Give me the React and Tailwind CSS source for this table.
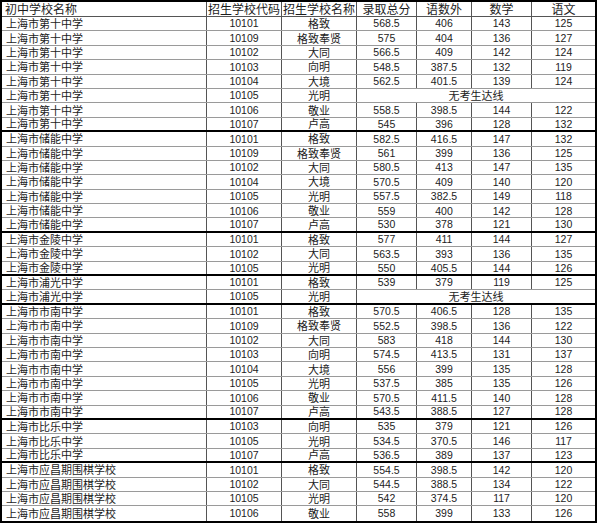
import React from 'react'

const groups = [
    {
        name: "上海市第十中学",
        rows: [
            ["10101", "格致", "568.5", "406", "143", "125"],
            ["10109", "格致奉贤", "575", "404", "136", "127"],
            ["10102", "大同", "566.5", "409", "142", "124"],
            ["10103", "向明", "548.5", "387.5", "132", "119"],
            ["10104", "大境", "562.5", "401.5", "139", "124"],
            ["10105", "光明", null],
            ["10106", "敬业", "558.5", "398.5", "144", "122"],
            ["10107", "卢高", "545", "396", "128", "132"],
        ],
    },
    {
        name: "上海市储能中学",
        rows: [
            ["10101", "格致", "582.5", "416.5", "147", "132"],
            ["10109", "格致奉贤", "561", "399", "136", "125"],
            ["10102", "大同", "580.5", "413", "147", "135"],
            ["10104", "大境", "570.5", "409", "140", "120"],
            ["10105", "光明", "557.5", "382.5", "149", "118"],
            ["10106", "敬业", "559", "400", "142", "128"],
            ["10107", "卢高", "530", "378", "121", "130"],
        ],
    },
    {
        name: "上海市金陵中学",
        rows: [
            ["10101", "格致", "577", "411", "144", "127"],
            ["10102", "大同", "563.5", "393", "136", "135"],
            ["10105", "光明", "550", "405.5", "144", "126"],
        ],
    },
    {
        name: "上海市浦光中学",
        rows: [
            ["10101", "格致", "539", "379", "119", "125"],
            ["10105", "光明", null],
        ],
    },
    {
        name: "上海市市南中学",
        rows: [
            ["10101", "格致", "570.5", "406.5", "128", "135"],
            ["10109", "格致奉贤", "552.5", "398.5", "136", "122"],
            ["10102", "大同", "583", "418", "144", "130"],
            ["10103", "向明", "574.5", "413.5", "131", "137"],
            ["10104", "大境", "556", "399", "135", "128"],
            ["10105", "光明", "537.5", "385", "135", "126"],
            ["10106", "敬业", "570.5", "411.5", "140", "128"],
            ["10107", "卢高", "543.5", "388.5", "127", "128"],
        ],
    },
    {
        name: "上海市比乐中学",
        rows: [
            ["10103", "向明", "535", "379", "121", "126"],
            ["10105", "光明", "534.5", "370.5", "146", "117"],
            ["10107", "卢高", "536.5", "389", "137", "123"],
        ],
    },
    {
        name: "上海市应昌期围棋学校",
        rows: [
            ["10101", "格致", "554.5", "398.5", "142", "120"],
            ["10102", "大同", "544.5", "388.5", "134", "122"],
            ["10105", "光明", "542", "374.5", "117", "120"],
            ["10106", "敬业", "558", "399", "133", "126"],
        ],
    },
]

// cell classes
const cjk = "font-['Noto_Sans_CJK_SC',sans-serif] text-[11px] leading-none"
const num = "font-['Liberation_Sans','Noto_Sans_CJK_SC',sans-serif] text-[10.5px] leading-none"
const cell = "flex items-center justify-center border-r border-[#555] "

function Row({ name, row, last, end }) {
    const [code, school, total, three, math, chinese] = row
    const border = end ? "" : last ? "border-b-2 border-black" : "border-b border-[#9a9a9a]"
    return (
        <div className={"flex h-[14.4px] text-[#1c1c1c] " + border}>
            <div className={"w-[205px] flex items-center pl-[4px] border-r border-[#555] " + cjk}>{name}</div>
            <div className={"w-[75px] " + cell + num}>{code}</div>
            <div className={"w-[75px] " + cell + cjk}>{school}</div>
            {total === null ? (
                <div className={"w-[238px] flex items-center justify-center " + cjk}>无考生达线</div>
            ) : (
                <>
                    <div className={"w-[60px] " + cell + num}>{total}</div>
                    <div className={"w-[55px] " + cell + num}>{three}</div>
                    <div className={"w-[60px] " + cell + num}>{math}</div>
                    <div className={"w-[63px] flex items-center justify-center " + num}>{chinese}</div>
                </>
            )}
        </div>
    )
}

export default function App() {
    return (
        <div className="w-[599px] h-[526px] bg-white">
            <div className="w-[597px] border-2 border-black">
                <div className="flex h-[15px] border-b border-[#555] text-[#1c1c1c] text-[12px] leading-[12px] font-['Noto_Sans_CJK_SC',sans-serif]">
                    <div className="w-[205px] flex items-center pl-[3px] border-r border-[#555]">初中学校名称</div>
                    <div className="w-[75px] flex items-center justify-center border-r border-[#555] whitespace-nowrap">招生学校代码</div>
                    <div className="w-[75px] flex items-center justify-center border-r border-[#555] whitespace-nowrap">招生学校名称</div>
                    <div className="w-[60px] flex items-center justify-center border-r border-[#555]">录取总分</div>
                    <div className="w-[55px] flex items-center justify-center border-r border-[#555]">语数外</div>
                    <div className="w-[60px] flex items-center justify-center border-r border-[#555]">数学</div>
                    <div className="w-[63px] flex items-center justify-center">语文</div>
                </div>
                {groups.map((g, gi) =>
                    g.rows.map((r, ri) => (
                        <Row
                            key={gi + "-" + ri}
                            name={g.name}
                            row={r}
                            last={ri === g.rows.length - 1}
                            end={gi === groups.length - 1 && ri === g.rows.length - 1}
                        />
                    ))
                )}
            </div>
        </div>
    )
}
